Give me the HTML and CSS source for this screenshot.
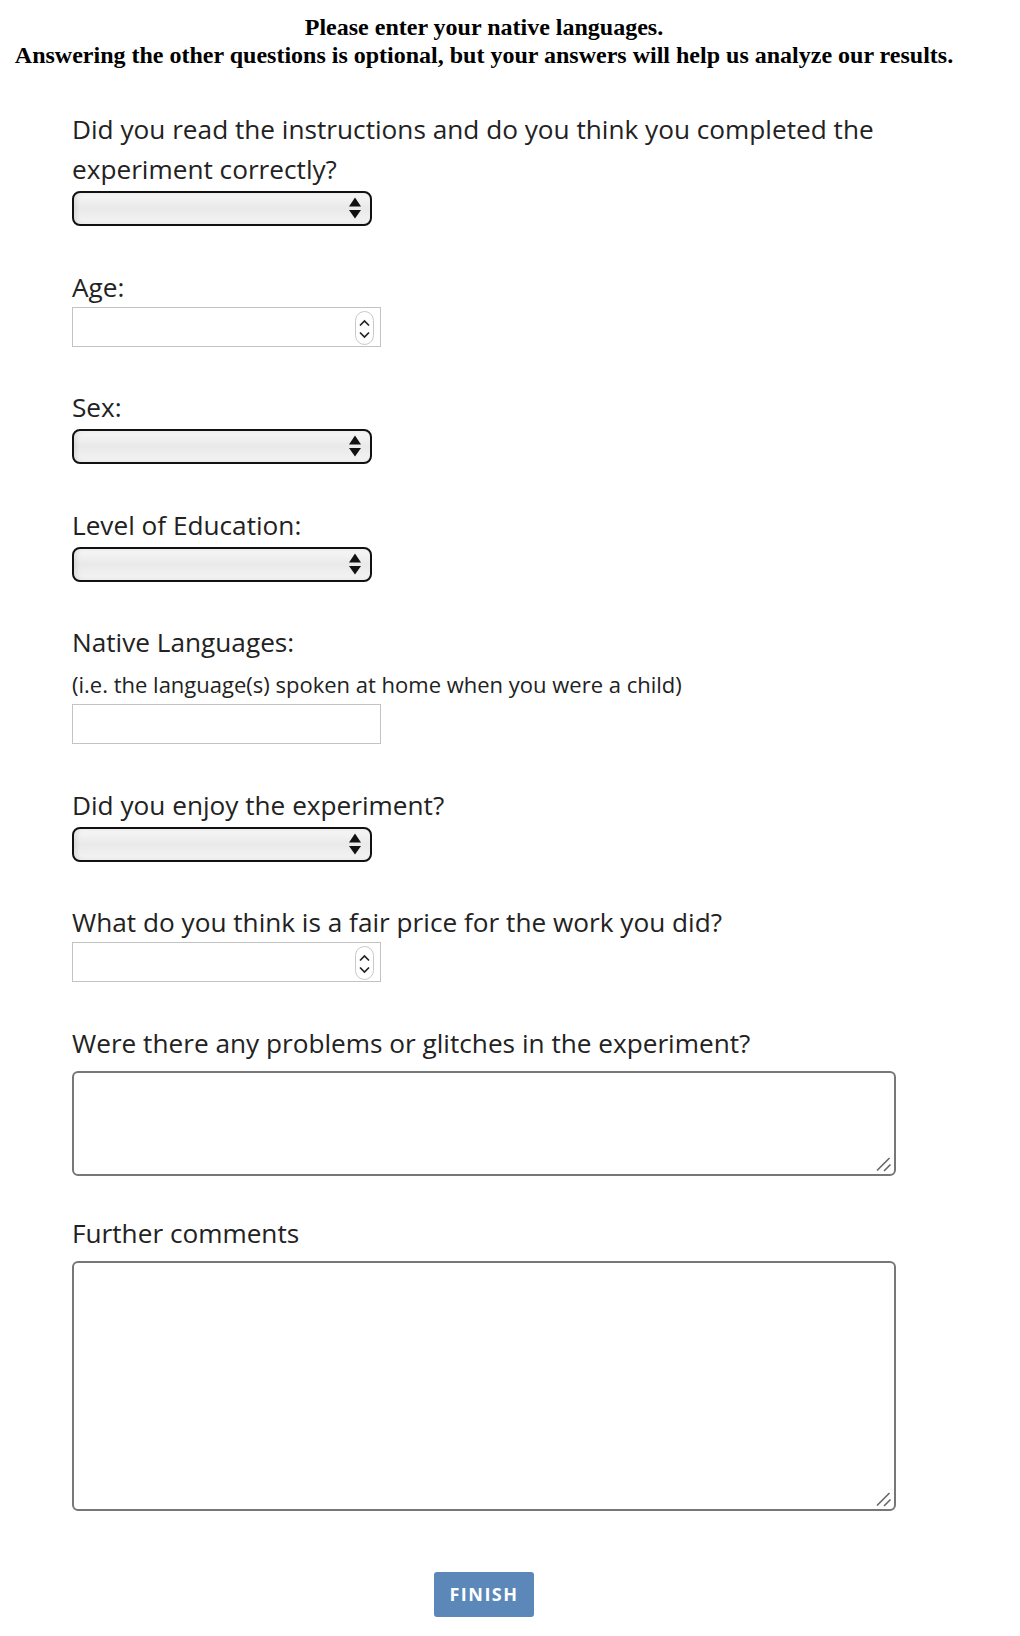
FILE: index.html
```html
<!DOCTYPE html>
<html lang="en">
<head>
<meta charset="utf-8">
<title>Questionnaire</title>
<link rel="stylesheet" href="styles.css">
</head>
<body>
<div class="page">
  <div class="notice">
    <div>Please enter your native languages.</div>
    <div>Answering the other questions is optional, but your answers will help us analyze our results.</div>
  </div>
  <form class="form">
    <div class="group">
      <label class="label">Did you read the instructions and do you think you completed the experiment correctly?</label>
      <span class="select-wrap">
        <select class="select"><option></option></select>
        <svg class="select-arrows" width="14" height="22" viewBox="0 0 14 22"><path d="M1 9.5 L7 0.5 L13 9.5 Z" fill="#111"/><path d="M1 13 L7 21.5 L13 13 Z" fill="#111"/></svg>
      </span>
    </div>
    <div class="group">
      <label class="label">Age:</label>
      <span class="num-wrap">
        <input class="input num" type="number">
        <svg class="spinner" width="19" height="34" viewBox="0 0 19 34"><rect x="0.5" y="0.5" width="18" height="33" rx="9" fill="#fff" stroke="#c8c8c8"/><path d="M5 14.5 L9.5 10 L14 14.5" fill="none" stroke="#222" stroke-width="1.7"/><path d="M5 21.5 L9.5 26 L14 21.5" fill="none" stroke="#222" stroke-width="1.7"/></svg>
      </span>
    </div>
    <div class="group">
      <label class="label">Sex:</label>
      <span class="select-wrap">
        <select class="select"><option></option></select>
        <svg class="select-arrows" width="14" height="22" viewBox="0 0 14 22"><path d="M1 9.5 L7 0.5 L13 9.5 Z" fill="#111"/><path d="M1 13 L7 21.5 L13 13 Z" fill="#111"/></svg>
      </span>
    </div>
    <div class="group">
      <label class="label">Level of Education:</label>
      <span class="select-wrap">
        <select class="select"><option></option></select>
        <svg class="select-arrows" width="14" height="22" viewBox="0 0 14 22"><path d="M1 9.5 L7 0.5 L13 9.5 Z" fill="#111"/><path d="M1 13 L7 21.5 L13 13 Z" fill="#111"/></svg>
      </span>
    </div>
    <div class="group">
      <label class="label">Native Languages:</label>
      <div class="hint">(i.e. the language(s) spoken at home when you were a child)</div>
      <input class="input text" type="text">
    </div>
    <div class="group">
      <label class="label">Did you enjoy the experiment?</label>
      <span class="select-wrap">
        <select class="select"><option></option></select>
        <svg class="select-arrows" width="14" height="22" viewBox="0 0 14 22"><path d="M1 9.5 L7 0.5 L13 9.5 Z" fill="#111"/><path d="M1 13 L7 21.5 L13 13 Z" fill="#111"/></svg>
      </span>
    </div>
    <div class="group">
      <label class="label">What do you think is a fair price for the work you did?</label>
      <span class="num-wrap">
        <input class="input num" type="number">
        <svg class="spinner" width="19" height="34" viewBox="0 0 19 34"><rect x="0.5" y="0.5" width="18" height="33" rx="9" fill="#fff" stroke="#c8c8c8"/><path d="M5 14.5 L9.5 10 L14 14.5" fill="none" stroke="#222" stroke-width="1.7"/><path d="M5 21.5 L9.5 26 L14 21.5" fill="none" stroke="#222" stroke-width="1.7"/></svg>
      </span>
    </div>
    <div class="group group-area">
      <label class="label">Were there any problems or glitches in the experiment?</label>
      <span class="area-wrap">
        <textarea class="area area-small"></textarea>
        <svg class="grip" width="16" height="16" viewBox="0 0 16 16"><path d="M1 14.5 L13.5 2" stroke="#666" stroke-width="1.6"/><path d="M8 15 L14.5 8.5" stroke="#666" stroke-width="1.6"/></svg>
      </span>
    </div>
    <div class="group group-area">
      <label class="label">Further comments</label>
      <span class="area-wrap">
        <textarea class="area area-large"></textarea>
        <svg class="grip" width="16" height="16" viewBox="0 0 16 16"><path d="M1 14.5 L13.5 2" stroke="#666" stroke-width="1.6"/><path d="M8 15 L14.5 8.5" stroke="#666" stroke-width="1.6"/></svg>
      </span>
    </div>
    <div class="actions">
      <button type="button" class="finish">FINISH</button>
    </div>
  </form>
</div>
</body>
</html>
```
FILE: styles.css
```css
html, body {
  margin: 0;
  padding: 0;
  background: #fff;
}
body {
  padding: 0 8px;
}
.page {
  width: 952px;
}
.notice {
  padding-top: 13px;
  font-family: "Liberation Serif", "Times New Roman", serif;
  font-weight: bold;
  font-size: 24px;
  line-height: 28px;
  text-align: center;
  color: #000;
}
.form {
  padding: 40px 64px 0;
  font-family: "Open Sans", "Noto Sans", sans-serif;
  color: #222;
}
.group {
  display: flex;
  flex-direction: column;
  align-items: flex-start;
  margin-bottom: 40.5px;
}
.group-area {
  margin-bottom: 37px;
}
.label {
  display: block;
  font-size: 26.2px;
  line-height: 40px;
}
.hint {
  padding-top: 4px;
  font-size: 22px;
  line-height: 36px;
}
.select-wrap {
  position: relative;
  display: block;
  margin-top: 2px;
  width: 300px;
  height: 35px;
}
.select {
  -webkit-appearance: none;
  appearance: none;
  box-sizing: border-box;
  width: 300px;
  height: 35px;
  margin: 0;
  border: 2px solid #111;
  border-radius: 8px;
  background: linear-gradient(to bottom, #f7f7f7 0%, #e9e9e9 50%, #f4f4f4 100%);
  box-shadow: inset 3px 0 4px rgba(0, 0, 0, 0.08);
  font-size: 16px;
}
.select-arrows {
  position: absolute;
  left: 276px;
  top: 6px;
  pointer-events: none;
}
.num-wrap {
  position: relative;
  display: block;
  width: 309px;
  height: 40px;
}
.input {
  box-sizing: border-box;
  width: 309px;
  height: 40px;
  margin: 0;
  padding: 0 8px;
  border: 1px solid #c3c3c3;
  border-radius: 0;
  background: #fff;
  font-size: 18px;
  font-family: "Open Sans", sans-serif;
}
.text {
  margin-top: 2px;
}
.num::-webkit-inner-spin-button,
.num::-webkit-outer-spin-button {
  -webkit-appearance: none;
  margin: 0;
}
.num {
  -moz-appearance: textfield;
}
.spinner {
  position: absolute;
  left: 283px;
  top: 4px;
  pointer-events: none;
}
.area-wrap {
  position: relative;
  display: block;
  margin-top: 8px;
  width: 824px;
}
.area {
  display: block;
  box-sizing: border-box;
  width: 824px;
  margin: 0;
  border: 2px solid #777;
  border-radius: 6px;
  background: #fff;
  resize: none;
  font-family: "Open Sans", sans-serif;
  font-size: 16px;
}
.grip {
  position: absolute;
  right: 4px;
  bottom: 4px;
  pointer-events: none;
}
.area-small {
  height: 105px;
}
.area-large {
  height: 250px;
}
.actions {
  display: flex;
  justify-content: center;
  padding-top: 24px;
}
.finish {
  width: 100px;
  height: 45px;
  border: none;
  border-radius: 3px;
  background: #5b87b9;
  color: #fff;
  font-family: "Open Sans", sans-serif;
  font-weight: bold;
  font-size: 18px;
  letter-spacing: 1.5px;
  padding: 0;
}
```
